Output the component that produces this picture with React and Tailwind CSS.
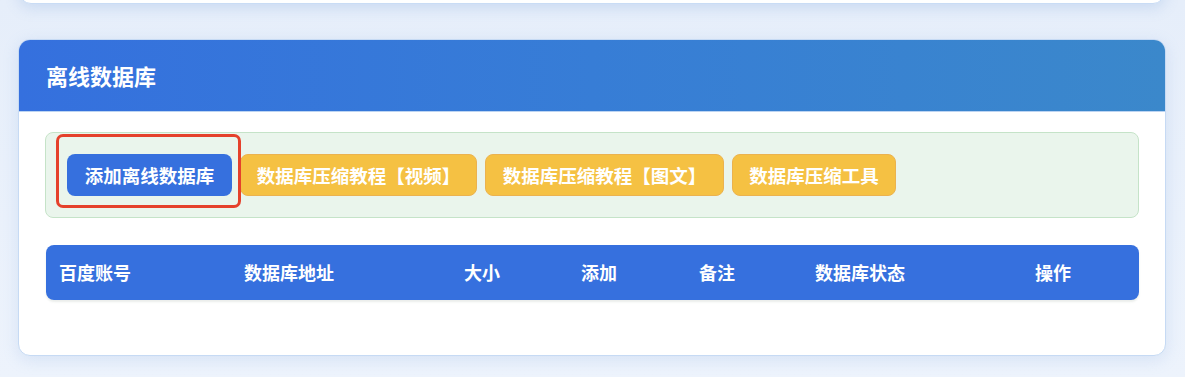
import React from 'react';

const cols = [
  { label: '百度账号', w: 'w-[185px]' },
  { label: '数据库地址', w: 'w-[220px]' },
  { label: '大小', w: 'w-[117px]' },
  { label: '添加', w: 'w-[118px]' },
  { label: '备注', w: 'w-[116px]' },
  { label: '数据库状态', w: 'w-[220px]' },
  { label: '操作', w: 'flex-1' },
];

const guides = [
  { label: '数据库压缩教程【视频】', w: 'w-[237px]' },
  { label: '数据库压缩教程【图文】', w: 'w-[239px]' },
  { label: '数据库压缩工具', w: 'w-[164px]' },
];

export default function App() {
  return (
    <div
      className="w-[1185px] h-[377px] overflow-hidden bg-gradient-to-b from-[#e6eefa] to-[#edf3fc]"
      style={{ fontFamily: '"Noto Sans CJK SC", "Noto Sans", sans-serif' }}
    >
      {/* bottom edge of the card above */}
      <div className="ml-[19px] mr-[20px] h-[40px] -mt-[36px] bg-white rounded-b-xl border border-[#c9dcf5] shadow-[0_4px_14px_rgba(120,160,220,0.25)]" />

      <div className="ml-[18px] mr-[19px] mt-[35px] h-[317px] bg-white rounded-xl border border-[#c6daf4] overflow-hidden shadow-[0_4px_16px_rgba(120,160,220,0.2)]">
        <div className="h-[72px] flex items-center pl-[27px] bg-gradient-to-r from-[#3570de] via-[#377dd6] to-[#3b88cb] border-b border-[#bcd4f2]">
          <h2 className="text-[22px] font-bold text-white">离线数据库</h2>
        </div>

        <div className="px-[26px] pt-[20px]">
          <div className="h-[86px] flex items-center gap-[8px] pl-[21px] bg-[#eaf5ec] border border-[#c5e3c8] rounded-lg">
            <div className="relative">
              <button className="w-[165px] h-[42px] rounded-lg bg-[#3670de] text-white text-[18.5px] font-bold leading-none">
                添加离线数据库
              </button>
              <div className="absolute -left-[11px] -top-[20px] -right-[9px] -bottom-[12px] border-[3px] border-[#e5412b] rounded-[7px] pointer-events-none" />
            </div>
            {guides.map((g) => (
              <button
                key={g.label}
                className={`${g.w} h-[42px] rounded-lg bg-[#f5c143] border border-[#ebb24f] text-white text-[18.5px] font-bold leading-none`}
              >
                {g.label}
              </button>
            ))}
          </div>

          <div className="mt-[27px] ml-[1px] h-[55px] flex items-center rounded-lg bg-[#3670de] shadow-[0_2px_2px_rgba(120,140,120,0.15)]">
            {cols.map((c) => (
              <div key={c.label} className={`${c.w} pl-[13px] text-white text-[18px] font-bold`}>
                {c.label}
              </div>
            ))}
          </div>
        </div>
      </div>
    </div>
  );
}
